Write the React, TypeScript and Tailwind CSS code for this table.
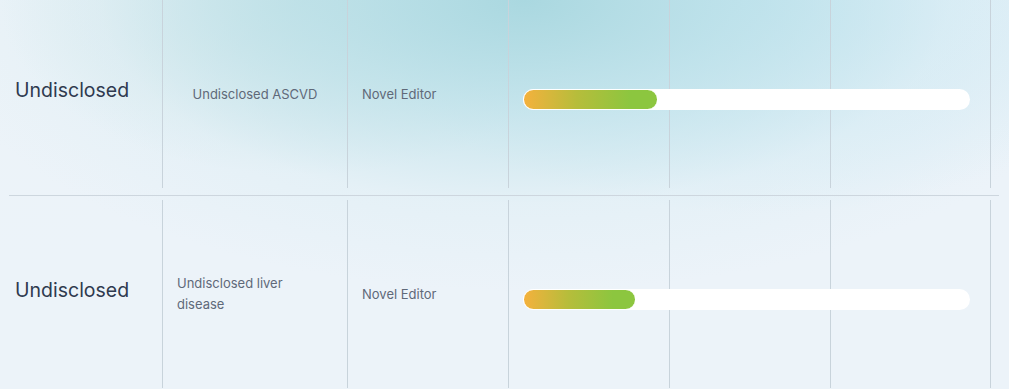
import React from "react";

type Row = { name: string; indication: string; modality: string; pct: number };

const rows: Row[] = [
  { name: "Undisclosed", indication: "Undisclosed ASCVD", modality: "Novel Editor", pct: 30.2 },
  { name: "Undisclosed", indication: "Undisclosed liver disease", modality: "Novel Editor", pct: 25.3 },
];

function TableRow({ row }: { row: Row }) {
  return (
    <div className="flex h-[188px]">
      <div className="w-[153px] shrink-0 flex items-center pl-[6px] pb-[9px]">
        <span className="text-[19.5px] leading-[28px] text-[#2f3a4f]">{row.name}</span>
      </div>
      <div className="w-[185px] shrink-0 border-l border-[#c8d3db] flex items-center justify-center px-[14px]">
        <span className="text-[13px] leading-[21px] text-[#5f6979]">{row.indication}</span>
      </div>
      <div className="w-[161px] shrink-0 border-l border-[#c8d3db] flex items-center pl-[14px]">
        <span className="text-[13px] leading-[21px] text-[#5f6979]">{row.modality}</span>
      </div>
      <div className="relative flex w-[483px] shrink-0">
        <div className="w-[161px] border-l border-[#c8d3db]" />
        <div className="w-[161px] border-l border-[#c8d3db]" />
        <div className="w-[161px] border-l border-r border-[#c8d3db]" />
        <div className="absolute left-[15px] right-[21px] top-[89px] h-[21px] rounded-full bg-white">
          <div
            className="h-full rounded-full border border-white bg-[linear-gradient(to_right,#f4b13d,#b6bd3b_40%,#8cc63f_80%)]"
            style={{ width: `${row.pct}%` }}
          />
        </div>
      </div>
    </div>
  );
}

export default function App() {
  return (
    <div className="w-[1009px] h-[389px] overflow-hidden bg-[#ecf3f9] font-['Inter','Noto_Sans',sans-serif]">
      <div className="h-full w-full bg-[radial-gradient(ellipse_60%_75%_at_52%_0%,rgba(170,216,224,1)_0%,rgba(186,224,232,0.75)_35%,rgba(215,236,242,0.35)_70%,transparent_100%),radial-gradient(ellipse_40%_55%_at_75%_0%,rgba(190,228,242,0.8),transparent),radial-gradient(ellipse_30%_45%_at_30%_0%,rgba(190,222,224,0.8),transparent),radial-gradient(ellipse_25%_60%_at_0%_10%,rgba(236,243,248,0.9),transparent)]">
        <div className="pl-[9px] pr-[10px]">
          <TableRow row={rows[0]} />
          <div className="mt-[7px] h-px bg-[#cdd6de]" />
          <div className="mt-[4px]">
            <TableRow row={rows[1]} />
          </div>
        </div>
      </div>
    </div>
  );
}
